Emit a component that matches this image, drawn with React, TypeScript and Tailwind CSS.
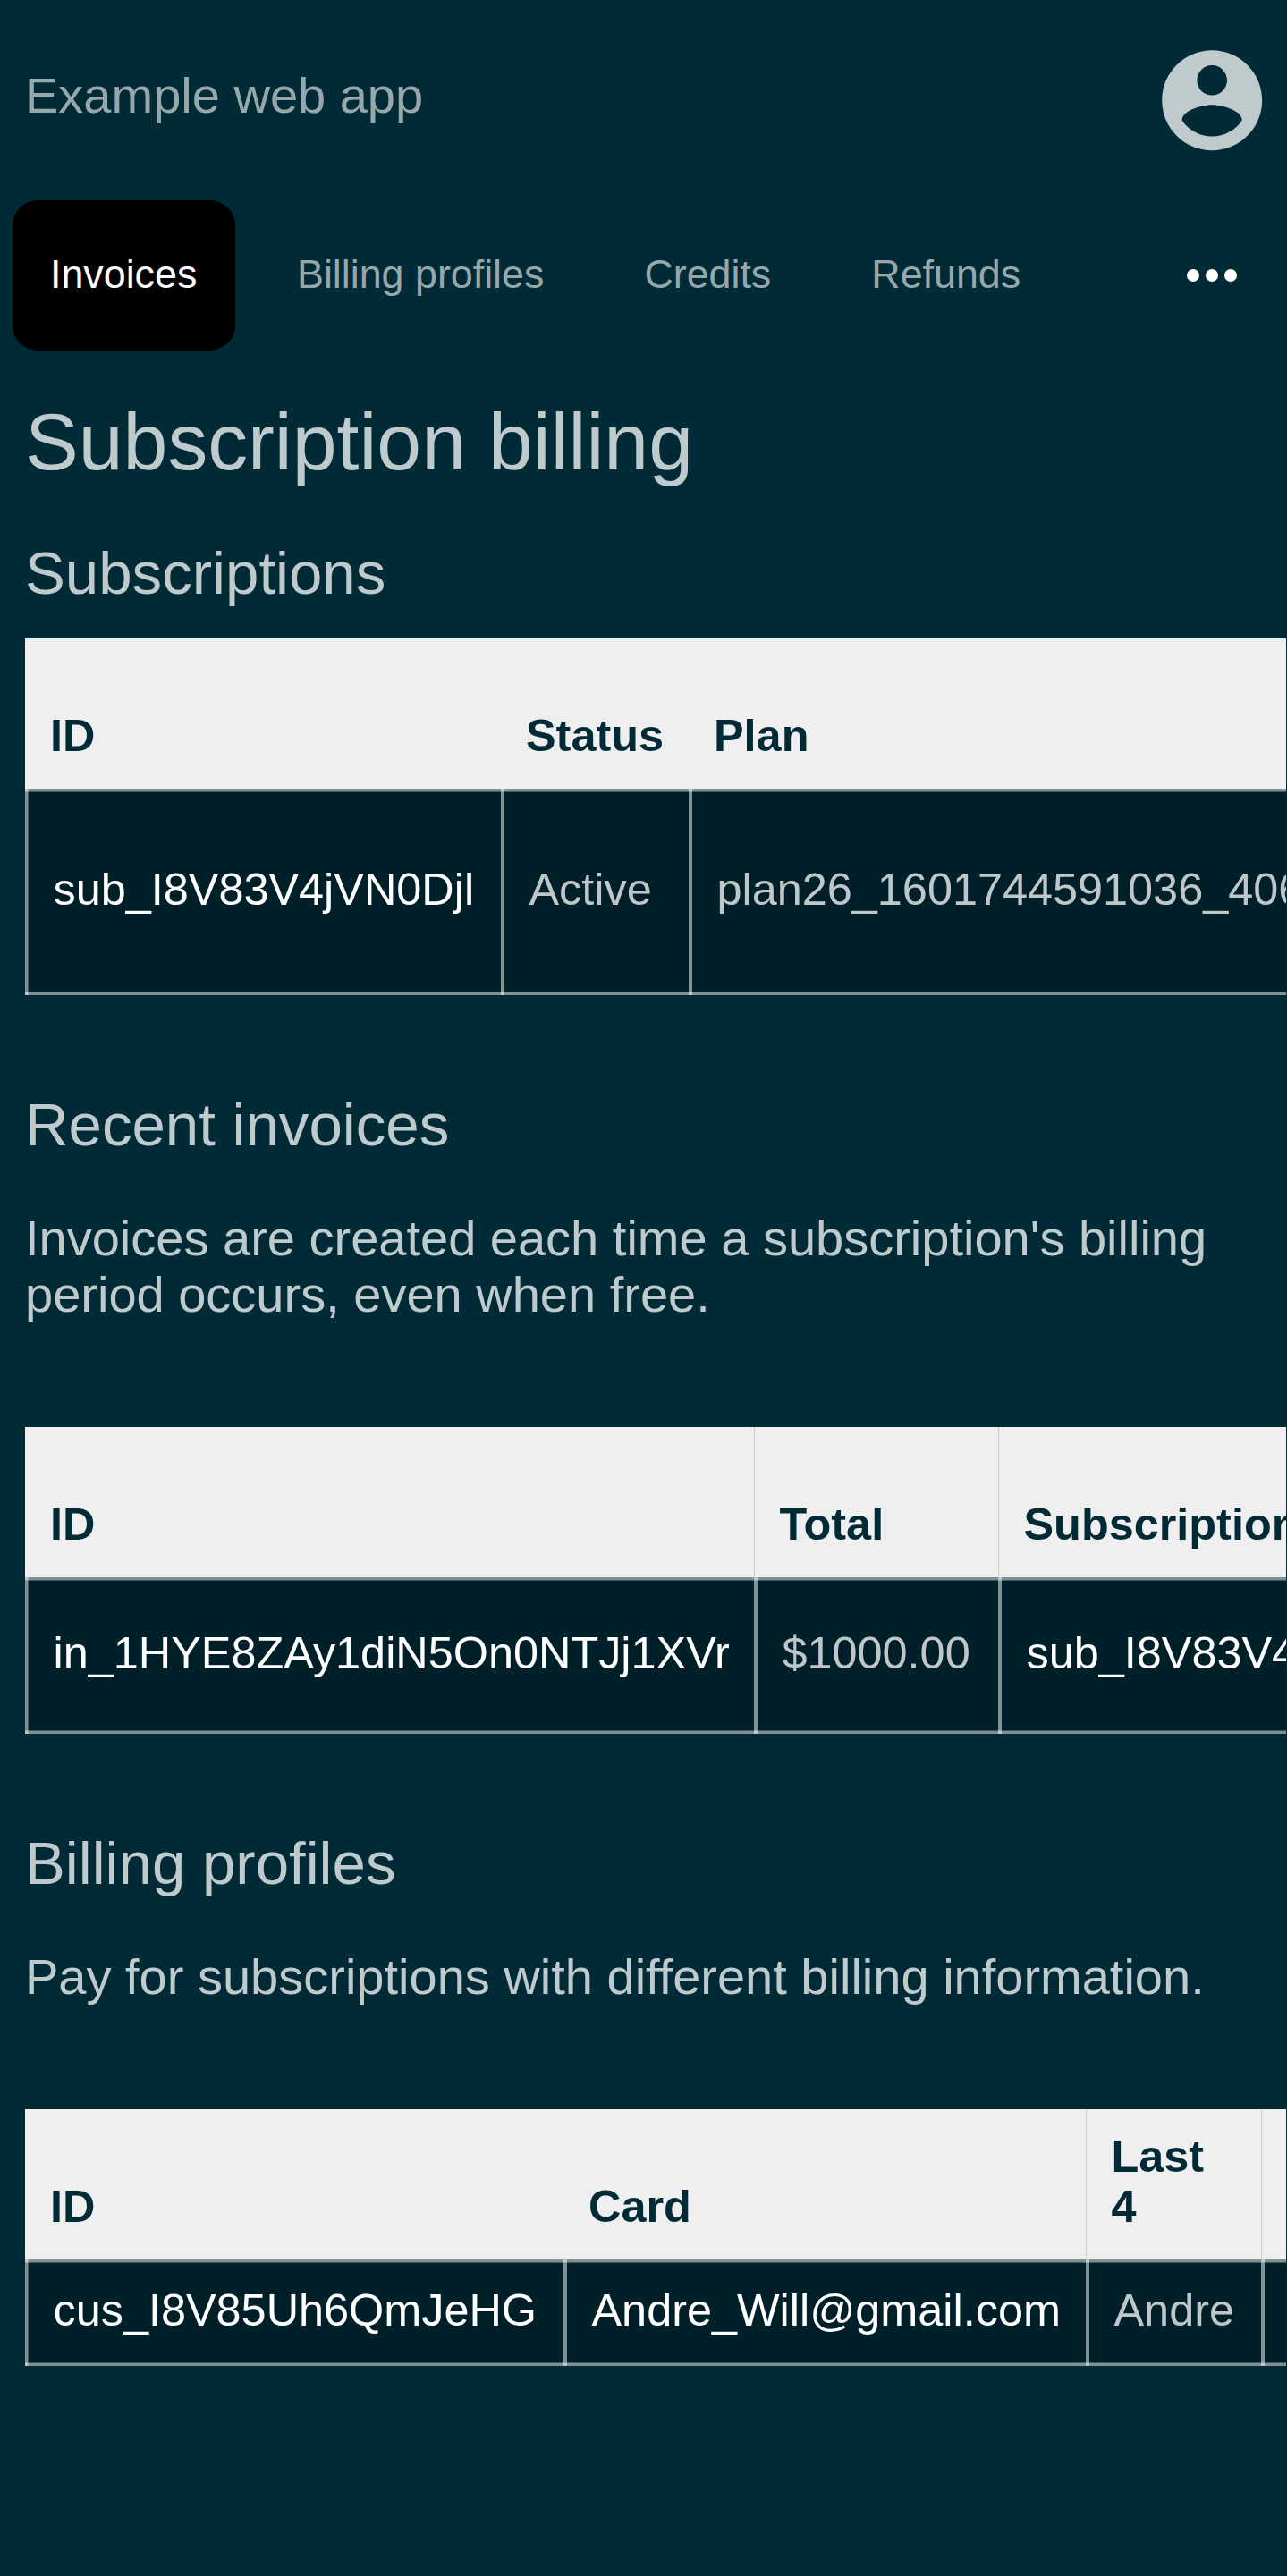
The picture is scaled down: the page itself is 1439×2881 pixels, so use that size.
type Col = { head: string; cell: string; w: string; link?: boolean; rule?: boolean };

function Table({ cols, rowH }: { cols: Col[]; rowH: string }) {
  return (
    <div className="ml-7 w-[1410px] overflow-hidden text-[50.4px] leading-[56px]">
      <div className="flex h-[168px] w-max bg-[#efefef] font-bold text-[#002b36]">
        {cols.map((c) => (
          <div key={c.head} className={`${c.w} shrink-0 flex items-end px-7 pb-[31px] ${c.rule ? "border-l border-[#c8cfd1] pl-[27.5px]" : ""}`}>
            <span className={c.head === "Last 4" ? "w-[120px]" : "whitespace-nowrap"}>{c.head}</span>
          </div>
        ))}
      </div>
      <div className={`relative flex w-max bg-[#002029] ${rowH}`}>
        {cols.map((c, i) => (
          <div
            key={c.head}
            className={`${c.w} shrink-0 flex items-center whitespace-nowrap border-[#7f9296] pb-1.5 ${
              i === 0 ? "border-l-3 pl-[28.5px] shadow-[inset_1px_0_0_#40585f]" : "border-l-4 pl-[27.5px]"
            } ${c.link ? "text-white" : "text-[#bfc7c9]"}`}
          >
            {c.cell}
          </div>
        ))}
        <div className="absolute inset-0 border-y-3 border-white/50 shadow-[inset_0_1px_0_rgba(255,255,255,0.25),inset_0_-1px_0_rgba(255,255,255,0.25)]" />
      </div>
    </div>
  );
}

function AccountIcon() {
  return (
    <svg viewBox="0 0 24 24" className="mr-[17px] size-[134.4px]" fill="currentColor">
      <path d="M12 2C6.48 2 2 6.48 2 12s4.48 10 10 10 10-4.48 10-10S17.52 2 12 2zm0 3c1.66 0 3 1.34 3 3s-1.34 3-3 3-3-1.34-3-3 1.34-3 3-3zm0 14.2c-2.5 0-4.71-1.28-6-3.22.03-1.99 4-3.08 6-3.08 1.99 0 5.97 1.09 6 3.08-1.29 1.94-3.5 3.22-6 3.22z" />
    </svg>
  );
}

export default function App() {
  return (
    <div className="h-[2881px] w-[1439px] overflow-hidden bg-[#002b36] font-['Liberation_Sans',Arial,sans-serif] text-[#bfcacd]">
      <header className="flex h-[224px] items-center justify-between pl-7">
        <span className="pb-[10px] text-[56px] leading-[64px] text-[#97a8ac]">Example web app</span>
        <AccountIcon />
      </header>
      <nav className="flex h-[168px] items-center text-[44.8px] leading-[52px] text-[#97a8ac]">
        <span className="ml-[14px] flex h-[168px] w-[249px] items-center rounded-[28px] bg-black pb-1 pl-[42px] text-white">Invoices</span>
        <span className="ml-[69px] pb-1">Billing profiles</span>
        <span className="ml-[112px] pb-1">Credits</span>
        <span className="ml-[112px] pb-1">Refunds</span>
        <svg viewBox="0 0 56 14" className="ml-auto mr-[56.5px] h-[14px] w-[56px] text-white" fill="currentColor">
          <circle cx="7" cy="7" r="7" />
          <circle cx="28" cy="7" r="7" />
          <circle cx="49" cy="7" r="7" />
        </svg>
      </nav>
      <h1 className="mt-[50px] pl-7 text-[89.6px] leading-[104px]">Subscription billing</h1>
      <h2 className="mt-[56px] pl-7 text-[67.2px] leading-[78px]">Subscriptions</h2>
      <div className="mt-[34px]">
        <Table
          rowH="h-[231px]"
          cols={[
            { head: "ID", cell: "sub_I8V83V4jVN0Djl", w: "w-[532px]", link: true },
            { head: "Status", cell: "Active", w: "w-[210px]" },
            { head: "Plan", cell: "plan26_1601744591036_406", w: "w-[900px]" },
          ]}
        />
      </div>
      <h2 className="mt-[106px] pl-7 text-[67.2px] leading-[78px]">Recent invoices</h2>
      <p className="mt-[56px] pl-7 text-[56px] leading-[63px]">
        Invoices are created each time a subscription's billing
        <br />
        period occurs, even when free.
      </p>
      <div className="mt-[117px]">
        <Table
          rowH="h-[175px]"
          cols={[
            { head: "ID", cell: "in_1HYE8ZAy1diN5On0NTJj1XVr", w: "w-[815px]", link: true },
            { head: "Total", cell: "$1000.00", w: "w-[273px]", rule: true },
            { head: "Subscription", cell: "sub_I8V83V4jVN0Djl", w: "w-[532px]", link: true, rule: true },
          ]}
        />
      </div>
      <h2 className="mt-[106px] pl-7 text-[67.2px] leading-[78px]">Billing profiles</h2>
      <p className="mt-[56px] pl-7 text-[56px] leading-[63px]">Pay for subscriptions with different billing information.</p>
      <div className="mt-[117px]">
        <Table
          rowH="h-[119px]"
          cols={[
            { head: "ID", cell: "cus_I8V85Uh6QmJeHG", w: "w-[602px]", link: true },
            { head: "Card", cell: "Andre_Will@gmail.com", w: "w-[584px]", link: true },
            { head: "Last 4", cell: "Andre", w: "w-[196px]", rule: true },
            { head: "", cell: "", w: "w-[200px]", rule: true },
          ]}
        />
      </div>
    </div>
  );
}
